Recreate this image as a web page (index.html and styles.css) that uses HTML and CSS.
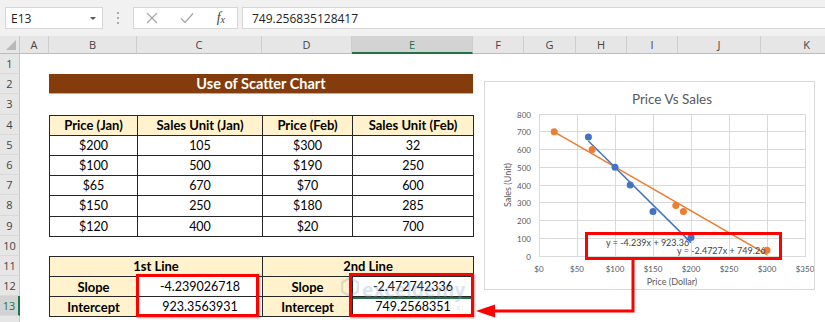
FILE: index.html
```html
<!DOCTYPE html>
<html>
<head>
<meta charset="utf-8">
<link rel="stylesheet" href="styles.css">
</head>
<body>
<div class="app">
  <div class="formula-bar">
    <div class="namebox"><span>E13</span><span class="caret"></span></div>
    <div class="dots">
      <svg width="4" height="14" viewBox="0 0 4 14"><circle cx="2" cy="2" r="1.1"/><circle cx="2" cy="7" r="1.1"/><circle cx="2" cy="12" r="1.1"/></svg>
    </div>
    <div class="fx-box">
      <svg class="ico" width="12" height="12" viewBox="0 0 12 12"><path d="M1 1 L11 11 M11 1 L1 11"/></svg>
      <svg class="ico" width="14" height="12" viewBox="0 0 14 12"><path d="M1 6.5 L5 10.5 L13 1.5"/></svg>
      <span class="fx">f<sub>x</sub></span>
    </div>
    <div class="formula-input">749.256835128417</div>
  </div>

  <div class="sheet">
    <div class="corner"><span class="tri"></span></div>
    <div class="colh">A</div>
    <div class="colh">B</div>
    <div class="colh">C</div>
    <div class="colh">D</div>
    <div class="colh active">E</div>
    <div class="colh">F</div>
    <div class="colh">G</div>
    <div class="colh">H</div>
    <div class="colh">I</div>
    <div class="colh">J</div>
    <div class="colh">K</div>

    <div class="rowh r1">1</div>
    <div class="rowh r2">2</div>
    <div class="rowh r3">3</div>
    <div class="rowh r4">4</div>
    <div class="rowh r5">5</div>
    <div class="rowh r6">6</div>
    <div class="rowh r7">7</div>
    <div class="rowh r8">8</div>
    <div class="rowh r9">9</div>
    <div class="rowh r10">10</div>
    <div class="rowh r11">11</div>
    <div class="rowh r12">12</div>
    <div class="rowh r13 active">13</div>
    <div class="rowh r14"></div>

    <div class="title">Use of Scatter Chart</div>

    <div class="table1">
      <table class="data">
        <colgroup><col class="cb"><col class="cc"><col class="cd"><col class="ce"></colgroup>
        <tr><th>Price (Jan)</th><th>Sales Unit (Jan)</th><th>Price (Feb)</th><th>Sales Unit (Feb)</th></tr>
        <tr><td>$200</td><td>105</td><td>$300</td><td>32</td></tr>
        <tr><td>$100</td><td>500</td><td>$190</td><td>250</td></tr>
        <tr><td>$65</td><td>670</td><td>$70</td><td>600</td></tr>
        <tr><td>$150</td><td>250</td><td>$180</td><td>285</td></tr>
        <tr><td>$120</td><td>400</td><td>$20</td><td>700</td></tr>
      </table>
    </div>

    <div class="table2">
      <table class="data">
        <colgroup><col class="cb"><col class="cc"><col class="cd"><col class="ce"></colgroup>
        <tr><th colspan="2">1st Line</th><th colspan="2">2nd Line</th></tr>
        <tr><th>Slope</th><td>-4.239026718</td><th>Slope</th><td>-2.472742336</td></tr>
        <tr><th>Intercept</th><td>923.3563931</td><th>Intercept</th><td class="selected">749.2568351</td></tr>
      </table>
    </div>
  </div>

  <div class="watermark">
    <svg width="18" height="20" viewBox="0 0 18 20"><path d="M9 1 L17 5.5 L17 14.5 L9 19 L1 14.5 L1 5.5 Z" fill="none" stroke="currentColor" stroke-width="2.5"/></svg>
    <div class="wm-text">
      <span class="wm-big">exceldemy</span>
      <span class="wm-small">EXCEL · DATA · BI</span>
    </div>
  </div>

  <div class="chart">
    <svg width="329" height="207" viewBox="0 0 329 207">
      <text class="ch-title" x="187" y="22" text-anchor="middle">Price Vs Sales</text>
      <g class="gridlines">
        <path d="M54 174.5H320.5 M54 156.5H320.5 M54 138.5H320.5 M54 120.5H320.5 M54 103.5H320.5 M54 85.5H320.5 M54 67.5H320.5 M54 49.5H320.5 M54 32.5H320.5"/>
        <path d="M54.5 32V175 M92.5 32V175 M130.5 32V175 M168.5 32V175 M206.5 32V175 M244.5 32V175 M282.5 32V175 M320.5 32V175"/>
      </g>
      <g class="ch-tick" text-anchor="end">
        <text x="46" y="35.5">800</text>
        <text x="46" y="52.5">700</text>
        <text x="46" y="70.5">600</text>
        <text x="46" y="88.5">500</text>
        <text x="46" y="106.5">400</text>
        <text x="46" y="123.5">300</text>
        <text x="46" y="141.5">200</text>
        <text x="46" y="159.5">100</text>
        <text x="46" y="177.5">0</text>
      </g>
      <g class="ch-tick" text-anchor="middle">
        <text x="54" y="190">$0</text>
        <text x="92" y="190">$50</text>
        <text x="130" y="190">$100</text>
        <text x="168" y="190">$150</text>
        <text x="206" y="190">$200</text>
        <text x="244" y="190">$250</text>
        <text x="282" y="190">$300</text>
        <text x="320" y="190">$350</text>
      </g>
      <text class="ch-axis" x="187" y="203" text-anchor="middle">Price (Dollar)</text>
      <text class="ch-axis" x="26" y="103" text-anchor="middle" transform="rotate(-90 26 103)">Sales (Unit)</text>

      <line class="tl-orange" x1="69.2" y1="49.8" x2="282" y2="172.7"/>
      <line class="tl-blue" x1="103.4" y1="59" x2="206" y2="160.6"/>

      <g class="pt-blue">
        <circle cx="206" cy="155.4" r="3.5"/>
        <circle cx="130" cy="85.3" r="3.5"/>
        <circle cx="103.4" cy="55.1" r="3.5"/>
        <circle cx="168" cy="129.6" r="3.5"/>
        <circle cx="145.2" cy="103" r="3.5"/>
      </g>
      <g class="pt-orange">
        <circle cx="282" cy="168.3" r="3.5"/>
        <circle cx="198.4" cy="129.6" r="3.5"/>
        <circle cx="107.2" cy="67.5" r="3.5"/>
        <circle cx="190.8" cy="123.4" r="3.5"/>
        <circle cx="69.2" cy="49.8" r="3.5"/>
      </g>

      <text class="ch-eq" x="121" y="164">y = -4.239x + 923.36</text>
      <text class="ch-eq" x="192" y="172">y = -2.4727x + 749.26</text>
    </svg>
  </div>

  <div class="hl hl-c"></div>
  <div class="hl hl-e"></div>

  <svg class="annot" width="825" height="322" viewBox="0 0 825 322">
    <rect x="586.5" y="233.5" width="194" height="25"/>
    <path d="M633 260 V311 H492"/>
    <polygon points="476,311 495,304.5 495,317.5"/>
  </svg>
</div>
</body>
</html>
```

FILE: styles.css
```css
html, body {
  margin: 0;
  padding: 0;
  background: #fff;
}

body {
  width: 825px;
  height: 322px;
  overflow: hidden;
  font-family: Lato, "Open Sans", sans-serif;
}

.app {
  position: relative;
  width: 825px;
  height: 322px;
  overflow: hidden;
  background: #fff;
}

/* ---------- formula bar ---------- */
.formula-bar {
  height: 36px;
  box-sizing: border-box;
  padding-top: 7px;
  background: #f1f1f1;
  display: flex;
  align-items: flex-start;
}

.namebox {
  margin-left: 5px;
  width: 98px;
  height: 22px;
  box-sizing: border-box;
  border: 1px solid #d6d6d6;
  background: #fff;
  display: flex;
  align-items: center;
  justify-content: space-between;
  padding: 0 6px 0 5px;
  font: 12px "Open Sans", sans-serif;
  color: #222;
}

.caret {
  width: 0;
  height: 0;
  border-left: 3px solid transparent;
  border-right: 3px solid transparent;
  border-top: 3px solid #555;
}

.dots {
  width: 30px;
  height: 22px;
  display: flex;
  align-items: center;
  justify-content: center;
}

.dots svg {
  fill: #9a9a9a;
}

.fx-box {
  width: 105px;
  height: 22px;
  box-sizing: border-box;
  border: 1px solid #d6d6d6;
  background: #fff;
  display: flex;
  align-items: center;
  justify-content: space-between;
  padding: 0 12px 0 12px;
}

.ico {
  fill: none;
  stroke: #a9a9a9;
  stroke-width: 1.3;
}

.fx {
  font: italic 14px "Liberation Serif", serif;
  color: #444;
  line-height: 1;
}

.fx sub {
  font-size: 10px;
  vertical-align: -1px;
}

.formula-input {
  margin-left: 4px;
  flex: 1;
  height: 22px;
  box-sizing: border-box;
  border: 1px solid #d6d6d6;
  border-right: none;
  background: #fff;
  padding-left: 9px;
  display: flex;
  align-items: center;
  font: 12px "Open Sans", sans-serif;
  color: #222;
}

/* ---------- sheet grid ---------- */
.sheet {
  display: grid;
  grid-template-columns: 20px 29px 88px 125px 90px 121px 51px 52px 51px 51px 83px 92px;
  grid-template-rows: 18px repeat(14, 20.2px);
}

.corner {
  grid-row: 1;
  grid-column: 1;
  background: #e6e6e6;
  border-bottom: 1px solid #bcbcbc;
  border-right: 1px solid #c8c8c8;
  box-sizing: border-box;
  position: relative;
}

.tri {
  position: absolute;
  right: 3px;
  bottom: 3px;
  width: 0;
  height: 0;
  border-left: 10px solid transparent;
  border-bottom: 10px solid #b9b9b9;
}

.colh {
  grid-row: 1;
  background: #e6e6e6;
  border-bottom: 1px solid #bcbcbc;
  border-right: 1px solid #cdcdcd;
  box-sizing: border-box;
  display: flex;
  align-items: center;
  justify-content: center;
  font: 11px "Open Sans", sans-serif;
  color: #444;
}

.colh.active {
  background: #d3d3d3;
  border-bottom: 2px solid #217346;
  color: #217346;
}

.rowh {
  grid-column: 1;
  background: #e6e6e6;
  border-right: 1px solid #c8c8c8;
  border-bottom: 1px solid #d9d9d9;
  box-sizing: border-box;
  display: flex;
  align-items: center;
  justify-content: center;
  font: 11px "Open Sans", sans-serif;
  color: #444;
}

.rowh.active {
  background: #d3d3d3;
  border-right: 2px solid #217346;
  color: #217346;
}

.r1 { grid-row: 2; }
.r2 { grid-row: 3; }
.r3 { grid-row: 4; }
.r4 { grid-row: 5; }
.r5 { grid-row: 6; }
.r6 { grid-row: 7; }
.r7 { grid-row: 8; }
.r8 { grid-row: 9; }
.r9 { grid-row: 10; }
.r10 { grid-row: 11; }
.r11 { grid-row: 12; }
.r12 { grid-row: 13; }
.r13 { grid-row: 14; }
.r14 { grid-row: 15; }

.title {
  grid-row: 3;
  grid-column: 3 / 7;
  background: #843c0c;
  border-bottom: 1px solid #9fb3d9;
  color: #fff;
  font-weight: 700;
  font-size: 14.5px;
  display: flex;
  align-items: center;
  justify-content: center;
}

.table1 {
  grid-row: 5 / 11;
  grid-column: 3 / 7;
}

.table2 {
  grid-row: 12 / 15;
  grid-column: 3 / 7;
}

.data {
  border-collapse: collapse;
  table-layout: fixed;
  width: 424px;
}

.cb { width: 88px; }
.cc { width: 125px; }
.cd { width: 90px; }
.ce { width: 121px; }

.data th,
.data td {
  border: 1px solid #262626;
  height: 20.2px;
  padding: 0;
  box-sizing: border-box;
  text-align: center;
  font-size: 12.5px;
  color: #000;
  white-space: nowrap;
}

.data th {
  background: #fff2cc;
  font-weight: 700;
  font-size: 13px;
}

.data td {
  background: #fff;
  font-weight: 400;
}

.data td.selected {
  box-shadow: inset 0 2px 0 #217346;
}

/* ---------- watermark ---------- */
.watermark {
  position: absolute;
  left: 341px;
  top: 277px;
  display: flex;
  align-items: flex-start;
  gap: 3px;
  color: #8fa3c9;
  opacity: 0.3;
}

.wm-text {
  display: flex;
  flex-direction: column;
  line-height: 1;
}

.wm-big {
  font: 700 19px "Open Sans", sans-serif;
  letter-spacing: 0.2px;
}

.wm-small {
  font: 6px "Open Sans", sans-serif;
  letter-spacing: 1.5px;
  margin-left: 30px;
  margin-top: 1px;
}

/* ---------- chart ---------- */
.chart {
  position: absolute;
  left: 485px;
  top: 82px;
  width: 329px;
  height: 207px;
  box-sizing: border-box;
  background: #fff;
  outline: 1px solid #d9d9d9;
}

.chart svg {
  display: block;
}

.ch-title {
  font: 13.5px Lato, sans-serif;
  fill: #595959;
}

.gridlines path {
  fill: none;
  stroke: #d9d9d9;
  stroke-width: 1;
}

.ch-tick {
  font: 8px Lato, sans-serif;
  fill: #595959;
}

.ch-axis {
  font: 9px Lato, sans-serif;
  fill: #595959;
}

.ch-eq {
  font: 9px Lato, sans-serif;
  fill: #404040;
}

.tl-blue {
  stroke: #4472c4;
  stroke-width: 1.5;
}

.tl-orange {
  stroke: #ed7d31;
  stroke-width: 1.5;
}

.pt-blue circle {
  fill: #4472c4;
}

.pt-orange circle {
  fill: #ed7d31;
}

/* ---------- annotations ---------- */
.hl {
  position: absolute;
  box-sizing: border-box;
  border: 3px solid #ff0000;
  box-shadow: 1px 1px 2px rgba(0, 0, 0, 0.35);
}

.hl-c {
  left: 136px;
  top: 274px;
  width: 123px;
  height: 43px;
}

.hl-e {
  left: 349px;
  top: 273px;
  width: 125px;
  height: 44px;
}

.annot {
  position: absolute;
  left: 0;
  top: 0;
  pointer-events: none;
}

.annot rect,
.annot path {
  fill: none;
  stroke: #ff0000;
  stroke-width: 3;
}

.annot polygon {
  fill: #ff0000;
}
```
